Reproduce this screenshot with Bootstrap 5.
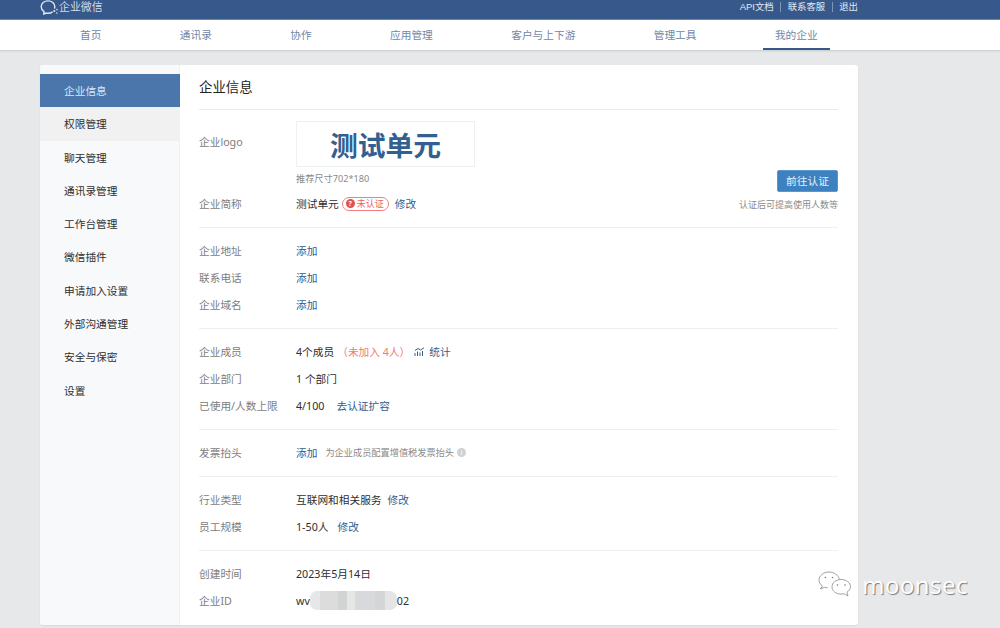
<!DOCTYPE html>
<html lang="zh-CN">
<head>
<meta charset="utf-8">
<title>企业信息</title>
<link rel="stylesheet" href="https://cdn.jsdelivr.net/npm/bootstrap@5.3.0/dist/css/bootstrap.min.css">
<style>
html,body{height:628px;overflow:hidden}
body{background:#e7e8ea;font-family:"Noto Sans","Noto Sans CJK SC",sans-serif;font-size:10.7px;line-height:16px;color:#2e2e2e;position:relative}
a{text-decoration:none;color:#2f5d8e}
.topbar{height:20px;background:#36588a;border-bottom:1px solid #6f88aa;padding:0 142px 5px 40px;color:#dbe3ee}
.brand-name{font-size:10.9px;color:#d5dde8}
.toplink{color:#e2e8f1;font-size:9.4px;font-family:"Liberation Sans","Noto Sans CJK SC",sans-serif}
.topsep{width:1px;height:10px;background:#7f96b5;margin:0 7px 0 6px}
.topsep-b{margin:0 6px 0 7px}
.mainnav{height:30px;background:#fff;box-shadow:0 1px 2px rgba(0,0,0,.14);padding-left:68px;gap:54.4px}
.mainnav a{height:30px;line-height:30px;padding:0 12px;color:#6f88a8;font-size:10.7px;display:block}
.mainnav a.on{border-bottom:2px solid #36588a}
.panel{width:818px;height:560px;margin:15px 0 0 40px;background:#fff;border-radius:3px;box-shadow:0 1px 2px rgba(0,0,0,.07);overflow:hidden}
.side{width:140px;flex:none;background:#f8f9fb;padding-top:9px;border-right:1px solid #f0f1f3}
.side a{display:block;height:33.3px;line-height:34px;padding-left:24px;color:#2e2e2e}
.side a.on{background:#4a76ac;color:#dce6f2;margin-right:-1px}
.side a.hov{background:#f1f1f1}
.content{padding:0 20px 0 19px}
.headline{height:45px;line-height:45px;font-size:13.4px;color:#252525;border-bottom:1px solid #e8e9eb}
.ln{height:27px;align-items:center}
.lbl{width:97px;flex:none;color:#7d7d7d}
.block{border-bottom:1px solid #eeeff1;padding:9px 0 10px}
.block-first{padding-top:0}
.block-last{padding:9px 0 0}
.logo-box{width:179px;height:46px;border:1px solid #eeeff1;color:#33608f;font-size:27.8px;font-weight:700;line-height:46px;text-align:center}
.hint{color:#8b8b8b;font-size:9.2px}
.logo-row{height:80px;padding-top:11px}
.logo-lbl{padding-top:13px}
.tag{height:14px;border:1px solid #f08080;border-radius:8px;color:#e2655f;font-size:9px;line-height:12px;padding:0 4px 0 3px;margin:0 6px 0 3px;gap:2px}
.qmark{width:9px;height:9px;border-radius:50%;background:#e0544f;color:#fff;font-size:7px;line-height:9px;text-align:center;font-weight:700}
.verify{width:61px;height:22px;background:#3d82c0;color:#e6f0f8;border:1px solid #5a97cc;border-radius:2px;font-size:10.7px;line-height:20px;padding:0;text-align:center}
.verify-wrap{width:140px;right:20px;top:105px}
.verify-note{color:#8b8b8b;font-size:9px;margin-top:5px}
.warn{color:#ee7a72;margin:0 4px 0 3px}
.infoi{width:9px;height:9px;border-radius:50%;background:#cfd1d3;color:#fff;font-size:7px;line-height:9px;text-align:center;margin-left:3px}
.blur-mask{width:87px;height:19px;border-radius:7px;background:linear-gradient(90deg,#e6e7e9 0 12%,#dcdcdc 12% 32%,#d2d3d3 32% 42%,#e6e6e4 42% 52%,#d8d9da 52% 75%,#d4d5d5 75% 86%,#e5e5e5 86%)}
.tight-link{margin-left:6px}
.loose-link{margin-left:9px}
.wm{right:32px;top:567px;font-family:"Open Sans","Noto Sans",sans-serif;font-size:24px;line-height:36px;color:#fff;letter-spacing:.5px;text-shadow:1px 1px 1px #777}
.wm-ic{right:147px;top:570px}
</style>
</head>
<body>
<div class="topbar d-flex align-items-center justify-content-between">
  <div class="d-flex align-items-center">
    <svg width="19" height="15" viewBox="0 0 19 15"><path d="M12.600 11.800c-1.300.9-2.900 1.400-4.600 1.400-.7 0-1.300-.1-1.900-.2M6.100 13 3.800 14l.2-2.400C2.300 10.400 1.200 8.600 1.200 6.700 1.200 3.400 4.200.9 8 .9s6.800 2.500 6.800 5.800c0 .7-.1 1.300-.4 1.900" fill="none" stroke="#dfe6ef" stroke-width="1.400"/><circle cx="14.300" cy="11" r="1.100" fill="#dfe6ef"/><circle cx="17" cy="9.600" r=".8" fill="#dfe6ef"/><circle cx="16.800" cy="13" r=".8" fill="#dfe6ef"/></svg>
    <span class="brand-name">企业微信</span>
  </div>
  <div class="d-flex align-items-center">
    <a class="toplink" href="#">API文档</a><span class="topsep"></span>
    <a class="toplink" href="#">联系客服</a><span class="topsep topsep-b"></span>
    <a class="toplink" href="#">退出</a>
  </div>
</div>
<nav class="mainnav d-flex">
  <a href="#">首页</a><a href="#">通讯录</a><a href="#">协作</a><a href="#">应用管理</a><a href="#">客户与上下游</a><a href="#">管理工具</a><a class="on" href="#">我的企业</a>
</nav>
<div class="panel d-flex position-relative">
  <div class="side">
    <a class="on" href="#">企业信息</a>
    <a class="hov" href="#">权限管理</a>
    <a href="#">聊天管理</a>
    <a href="#">通讯录管理</a>
    <a href="#">工作台管理</a>
    <a href="#">微信插件</a>
    <a href="#">申请加入设置</a>
    <a href="#">外部沟通管理</a>
    <a href="#">安全与保密</a>
    <a href="#">设置</a>
  </div>
  <div class="content flex-grow-1 position-relative">
    <div class="headline">企业信息</div>
    <div class="block block-first">
      <div class="logo-row d-flex">
        <div class="lbl logo-lbl">企业logo</div>
        <div>
          <div class="logo-box">测试单元</div>
          <div class="hint mt-1">推荐尺寸702*180</div>
        </div>
      </div>
      <div class="ln d-flex">
        <div class="lbl">企业简称</div>
        <span>测试单元</span>
        <span class="tag d-inline-flex align-items-center"><span class="qmark">?</span>未认证</span>
        <a href="#">修改</a>
      </div>
    </div>
    <div class="verify-wrap position-absolute text-end">
      <button class="verify btn" type="button">前往认证</button>
      <div class="verify-note">认证后可提高使用人数等</div>
    </div>
    <div class="block">
      <div class="ln d-flex"><div class="lbl">企业地址</div><a href="#">添加</a></div>
      <div class="ln d-flex"><div class="lbl">联系电话</div><a href="#">添加</a></div>
      <div class="ln d-flex"><div class="lbl">企业域名</div><a href="#">添加</a></div>
    </div>
    <div class="block">
      <div class="ln d-flex"><div class="lbl">企业成员</div><span>4个成员</span><span class="warn">（未加入 4人）</span>
        <a class="d-inline-flex align-items-center gap-1" href="#"><svg width="11" height="10" viewBox="0 0 11 10"><path d="M1 9V6M3.500 9V4.500M6 9V5.500M8.500 9V4M1 3.500 4 1.500 6.500 3 10 .8" fill="none" stroke="#2f5d8e" stroke-width="1"/></svg>统计</a></div>
      <div class="ln d-flex"><div class="lbl">企业部门</div><span>1 个部门</span></div>
      <div class="ln d-flex"><div class="lbl">已使用/人数上限</div><span>4/100</span><a class="ms-2 ps-1" href="#">去认证扩容</a></div>
    </div>
    <div class="block">
      <div class="ln d-flex"><div class="lbl">发票抬头</div><a href="#">添加</a><span class="hint ms-2">为企业成员配置增值税发票抬头</span><span class="infoi">i</span></div>
    </div>
    <div class="block">
      <div class="ln d-flex"><div class="lbl">行业类型</div><span>互联网和相关服务</span><a class="tight-link" href="#">修改</a></div>
      <div class="ln d-flex"><div class="lbl">员工规模</div><span>1-50人</span><a class="loose-link" href="#">修改</a></div>
    </div>
    <div class="block-last">
      <div class="ln d-flex"><div class="lbl">创建时间</div><span>2023年5月14日</span></div>
      <div class="ln d-flex"><div class="lbl">企业ID</div><span>wv</span><span class="blur-mask"></span><span>02</span></div>
    </div>
  </div>
</div>
<svg class="wm-ic position-absolute" width="36" height="32" viewBox="0 0 36 32"><path d="M12 2C6.500 2 2 5.700 2 10c0 2.400 1.300 4.500 3.400 6L3.500 19l4-1.700c1 .3 2 .5 3 .5M22.500 9.500C21.500 5.200 17 2 12 2" fill="#fff" stroke="#8a8a8a" stroke-width=".8"/><path d="M24 9.500c-5 0-9 3.300-9 7.300s4 7.300 9 7.300c1 0 2-.1 2.900-.4l4.100 2.300-1.100-3.800c2.200-1.400 3.600-3.400 3.600-5.400 0-4-4-7.300-9.500-7.300z" fill="#fff" stroke="#8a8a8a" stroke-width=".8"/><circle cx="8.500" cy="7.500" r=".8" fill="#777"/><circle cx="15.500" cy="7.500" r=".8" fill="#777"/><circle cx="20.500" cy="15" r=".8" fill="#777"/><circle cx="28" cy="15" r=".8" fill="#777"/></svg>
<div class="wm position-absolute">moonsec</div>
<script src="https://cdn.jsdelivr.net/npm/bootstrap@5.3.0/dist/js/bootstrap.bundle.min.js"></script>
</body>
</html>
